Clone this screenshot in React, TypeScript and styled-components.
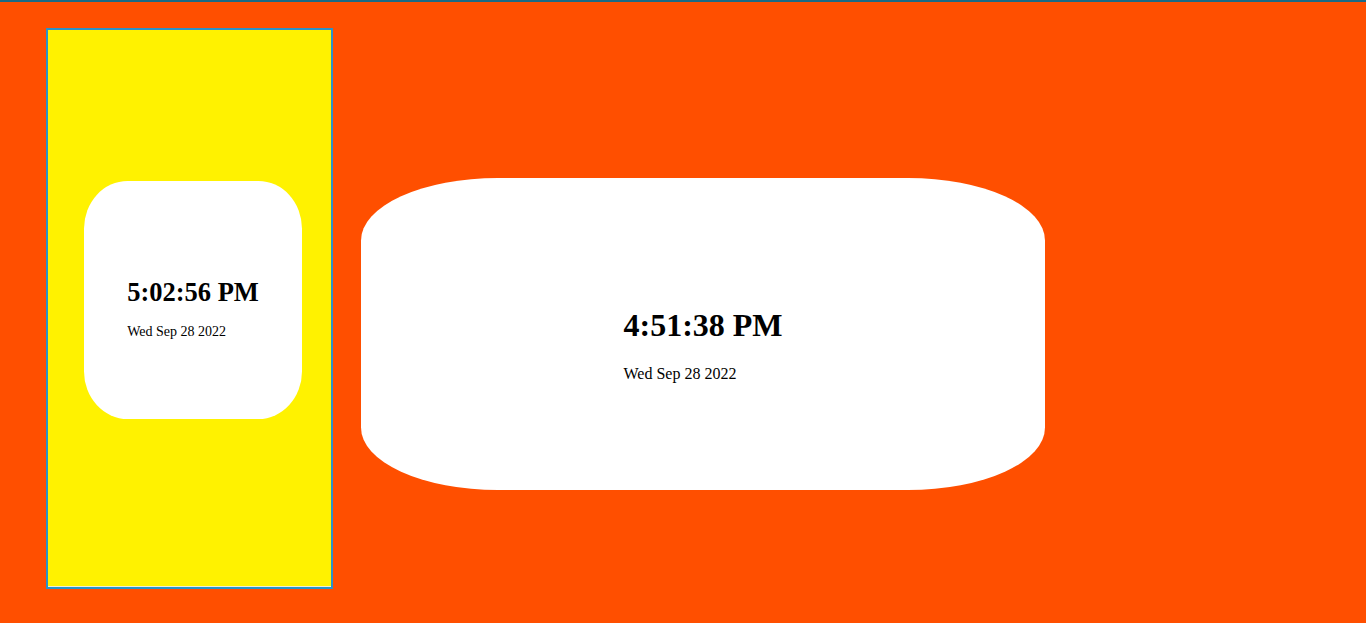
import React from 'react';
import styled, { createGlobalStyle } from 'styled-components';

const GlobalStyle = createGlobalStyle`
  html, body {
    margin: 0;
    padding: 0;
    background: #ff4f00;
  }
  body {
    font-family: "Liberation Serif", "Times New Roman", serif;
    color: #000;
  }
`;

type Size = 'small' | 'large';

interface ClockProps {
  time: string;
  date: string;
  size: Size;
}

const Clock: React.FC<ClockProps> = ({ time, date, size }) => {
  return (
    <ClockCard $size={size}>
      <div>
        <Time $size={size}>{time}</Time>
        <DateText $size={size}>{date}</DateText>
      </div>
    </ClockCard>
  );
};

const App: React.FC = () => {
  return (
    <>
      <GlobalStyle />
      <Page>
        <Phone>
          <Clock size="small" time="5:02:56 PM" date="Wed Sep 28 2022" />
        </Phone>
        <Clock size="large" time="4:51:38 PM" date="Wed Sep 28 2022" />
      </Page>
    </>
  );
};

const Page = styled.div`
  box-sizing: border-box;
  min-height: 623px;
  border-top: 2px solid #1a6a84;
  padding: 26px 0 0 46px;
  display: flex;
  align-items: flex-start;
  gap: 28px;
`;

/* the framed mobile preview */
const Phone = styled.div`
  box-sizing: border-box;
  width: 287px;
  height: 561px;
  border: 2px solid #2b92c6;
  background: #fff200;
  padding: 151px 0 0 36px;
  box-shadow: inset 0 -1px 0 #efeed6;
`;

const ClockCard = styled.div<{ $size: Size }>`
  box-sizing: border-box;
  background: #fff;
  border-radius: 20%;
  display: flex;
  align-items: flex-start;
  justify-content: center;
  width: ${p => (p.$size === 'small' ? '218px' : '684px')};
  height: ${p => (p.$size === 'small' ? '238px' : '312px')};
  padding-top: ${p => (p.$size === 'small' ? '96px' : '129px')};
  margin-top: ${p => (p.$size === 'small' ? '0' : '150px')};
`;

const Time = styled.h2<{ $size: Size }>`
  margin: 0 0 ${p => (p.$size === 'small' ? '16px' : '21px')};
  font-weight: 700;
  font-size: ${p => (p.$size === 'small' ? '26.5px' : '32px')};
  line-height: normal;
`;

const DateText = styled.p<{ $size: Size }>`
  margin: 0;
  font-size: ${p => (p.$size === 'small' ? '14px' : '16px')};
  line-height: normal;
`;

export default App;
